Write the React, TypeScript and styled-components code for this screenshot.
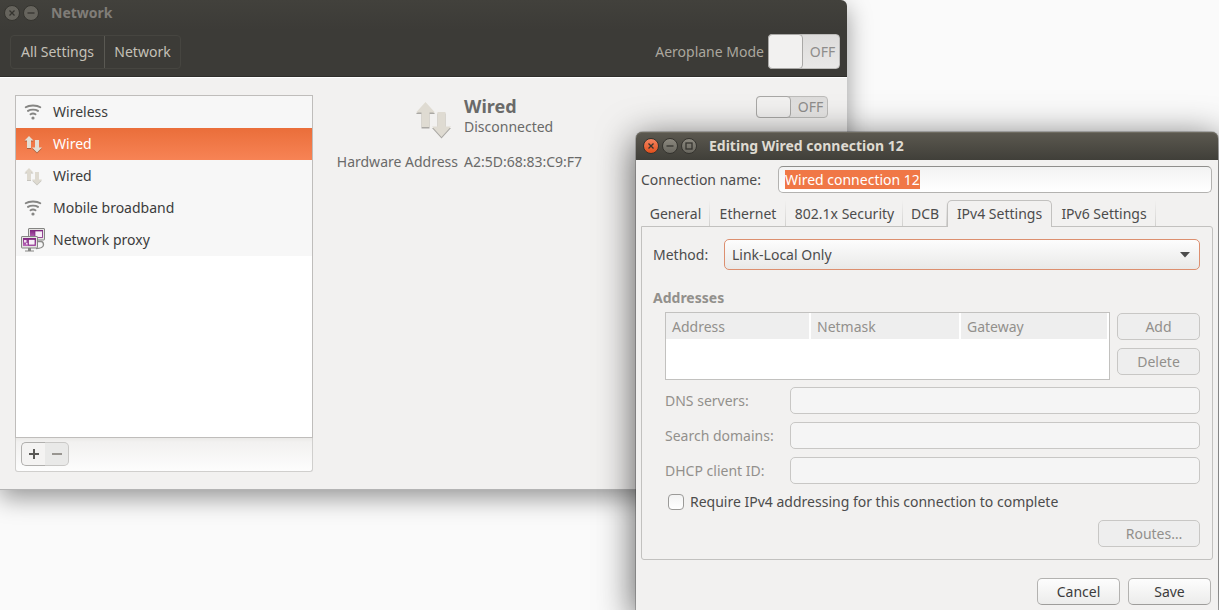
import React, { useEffect, useRef, useState } from "react";
import styled, { createGlobalStyle, css } from "styled-components";

const GlobalStyle = createGlobalStyle`
  *, *::before, *::after { box-sizing: border-box; }
  body {
    margin: 0;
    background: #fafafa;
    color: #3c3c3c;
    font-family: "Noto Sans", "Open Sans", sans-serif;
    font-size: 14px;
    line-height: 20px;
  }
  button, input, select { font: inherit; color: inherit; margin: 0; }
  button:focus, select:focus, input:focus { outline: none; }
  ul { margin: 0; padding: 0; list-style: none; }
`;

const Desktop = styled.main`
  position: relative;
  min-height: 100vh;
  overflow: hidden;
`;

/* ---------- window frames ---------- */

const SettingsWindow = styled.section`
  position: absolute;
  top: 0;
  left: 0;
  right: 372px;
  min-width: 660px;
  border-radius: 0 6px 0 0;
  background: #f2f1f0;
  border-bottom: 1px solid #b4b4b4;
  box-shadow: 0 8px 24px rgba(0, 0, 0, 0.4);
`;

const DialogWindow = styled.section`
  position: absolute;
  top: 132px;
  left: 636px;
  right: 1px;
  min-width: 560px;
  border-radius: 7px 7px 0 0;
  background: #f2f1f0;
  box-shadow: 0 0 0 1px rgba(0, 0, 0, 0.2), 0 8px 36px 2px rgba(0, 0, 0, 0.62);
`;

const TitleBar = styled.header<{ $active?: boolean }>`
  display: flex;
  align-items: center;
  gap: 3px;
  height: ${(p) => (p.$active ? 28 : 26)}px;
  padding: 0 4px;
  color: #807d78;
  ${(p) =>
    p.$active &&
    css`
      padding: 0 7px;
      color: #dfdbd2;
      border-radius: 6px 6px 0 0;
      background: linear-gradient(#5c5950, #403f39);
      box-shadow: inset 0 1px 0 #6e6b60;
    `}
`;

const WindowTitle = styled.h1`
  margin: 0;
  padding-left: 9px;
  font-size: 14px;
  line-height: 20px;
  font-weight: 700;
`;

const WindowButton = styled.button<{ $tone: "close" | "grey" | "dim" }>`
  display: grid;
  place-items: center;
  width: 16px;
  height: 16px;
  padding: 0;
  border: 1px solid #35342f;
  border-radius: 50%;
  color: #35342f;
  background: ${(p) =>
    p.$tone === "close"
      ? "linear-gradient(#f58460, #e2501c)"
      : p.$tone === "grey"
        ? "linear-gradient(#8b887e, #69675f)"
        : "#66645d"};
`;

/* ---------- settings window ---------- */

const DarkHeader = styled.div`
  border-radius: 0 6px 0 0;
  background: linear-gradient(#42413c, #3c3b37 30px);
  border-bottom: 1px solid #2f2e2b;
`;

const Toolbar = styled.div`
  display: flex;
  align-items: center;
  justify-content: space-between;
  padding: 8px 7px 7px 10px;
`;

const Breadcrumbs = styled.nav`
  display: flex;
  border: 1px solid #464540;
  border-radius: 4px;
`;

const Crumb = styled.button<{ $width: number }>`
  width: ${(p) => p.$width}px;
  height: 32px;
  padding: 0;
  border: 0;
  background: none;
  color: #c5c1b8;
  white-space: nowrap;
  & + & { border-left: 1px solid #5a5953; }
`;

const AeroplaneGroup = styled.div`
  display: flex;
  align-items: center;
  gap: 4px;
  color: #aba79e;
`;

const SwitchTrack = styled.label<{ $tall?: boolean }>`
  display: flex;
  width: 72px;
  height: ${(p) => (p.$tall ? 35 : 22)}px;
  border: 1px solid #bdbcba;
  border-radius: 4px;
  background: linear-gradient(#dddcdb, #e9e8e7);
  color: #8e8d8b;
`;

const SwitchKnob = styled.input`
  appearance: none;
  width: 35px;
  margin: -1px !important;
  border: 1px solid #a9a8a6;
  border-radius: 4px;
  background: #f2f1f0;
`;

const SwitchText = styled.span`
  flex: 1;
  align-self: center;
  padding-left: 4px;
  text-align: center;
`;

const SettingsBody = styled.div`
  display: flex;
  gap: 18px;
  padding: 17px 19px 17px 15px;
  border-top: 1px solid #fff;
`;

const Sidebar = styled.div`
  flex: 0 0 298px;
`;

const DeviceList = styled.ul`
  min-height: 343px;
  border: 1px solid #bfbdbb;
  background: #fff;
`;

const DeviceRow = styled.button<{ $selected: boolean }>`
  display: flex;
  align-items: center;
  gap: 8px;
  width: 100%;
  height: 32px;
  padding: 0 5px;
  border: 0;
  text-align: left;
  color: ${(p) => (p.$selected ? "#fff" : "#3c3c3c")};
  background: ${(p) => (p.$selected ? "linear-gradient(#ea6e3a, #f78355)" : "#f7f7f7")};
`;

const ListToolbar = styled.div`
  display: flex;
  padding: 4px 5px 5px;
  border: 1px solid #d0cfcd;
  border-top: 0;
  border-radius: 0 0 3px 3px;
  background: linear-gradient(#eae9e7, #f2f1f0 4px, #fdfdfd);
`;

const ListButton = styled.button`
  display: grid;
  place-items: center;
  width: 24px;
  height: 24px;
  padding: 0;
  border: 1px solid #b0afad;
  border-right: 0;
  border-radius: 5px 0 0 5px;
  color: #5a5956;
  background: #f4f3f2;
  & + & {
    border: 1px solid #c9c8c6;
    border-left: 0;
    border-radius: 0 5px 5px 0;
    background: #e9e9e8;
    color: #989590;
  }
`;

const Details = styled.div`
  flex: 1;
  display: grid;
  grid-template-columns: 127px 1fr auto;
  align-content: start;
  column-gap: 6px;
  padding-top: 1px;
  color: #6a6a69;
`;

const DeviceIcon = styled.div`
  justify-self: end;
  height: 56px;
  padding-top: 6px;
  margin-right: 6px;
`;

const DeviceName = styled.h2`
  margin: 0 0 1px;
  font-size: 18px;
  line-height: 20px;
  font-weight: 700;
`;

const DeviceValue = styled.div`
  line-height: 20px;
  white-space: nowrap;
`;

const HardwareLabel = styled(DeviceValue)`
  justify-self: end;
`;

/* ---------- connection dialog ---------- */

const DialogBody = styled.form`
  padding: 6px 5px 5px;
  color: #4c4c4c;
`;

const NameRow = styled.div`
  display: grid;
  grid-template-columns: 137px 1fr;
  align-items: center;
  padding-right: 1px;
`;

const TextInput = styled.input`
  width: 100%;
  min-width: 0;
  height: 27px;
  padding: 0 6px;
  border: 1px solid #b3b2b0;
  border-top-color: #8f8e8c;
  border-radius: 5px;
  background: linear-gradient(#f3f3f3, #fff);
  &::selection { background: #f07746; color: #fff; }
  &:disabled {
    border-color: #c8c7c5;
    background: #f5f5f5;
  }
`;

const TabStrip = styled.div`
  display: flex;
  align-items: flex-end;
  height: 26px;
  margin-top: 7px;
`;

const Tab = styled.button<{ $width: number; $active: boolean }>`
  width: ${(p) => p.$width}px;
  height: 26px;
  padding: 2px 0 0;
  border: 0;
  white-space: nowrap;
  background: linear-gradient(#f2f1f0, #d2d1cf) right / 1px 100% no-repeat;
  ${(p) =>
    p.$active &&
    css`
      position: relative;
      height: 27px;
      margin-bottom: -1px;
      padding: 0;
      border: 1px solid #c2c1bf;
      border-bottom: 0;
      border-radius: 5px 5px 0 0;
      background: #f2f1f0;
    `}
`;

const TabPanel = styled.div`
  padding: 12px 12px 12px 11px;
  border: 1px solid #c2c1bf;
  border-radius: 0 3px 3px 3px;
`;

const MethodRow = styled.div`
  display: grid;
  grid-template-columns: 71px 1fr;
  align-items: center;
`;

const SelectWrap = styled.div`
  position: relative;
`;

const Select = styled.select`
  appearance: none;
  display: block;
  width: 100%;
  height: 31px;
  padding: 0 7px;
  border: 1px solid #dc8f6f;
  border-radius: 5px;
  background: linear-gradient(#fdfdfd, #e9e9e8);
`;

const SelectArrow = styled.svg`
  position: absolute;
  right: 10px;
  top: 13px;
  pointer-events: none;
`;

const SectionTitle = styled.h2`
  margin: 18px 0 4px;
  font-size: 14px;
  line-height: 20px;
  font-weight: 700;
  color: #92908c;
`;

const Indented = styled.div`
  padding-left: 12px;
`;

const AddressArea = styled.div`
  display: flex;
  align-items: flex-start;
  gap: 7px;
`;

const TableFrame = styled.div`
  flex: 1;
  height: 68px;
  border: 1px solid #c2c1bf;
  background: #fff;
`;

const AddressTable = styled.table`
  width: 100%;
  table-layout: fixed;
  border-collapse: separate;
  border-spacing: 0;
  color: #92908c;
  th {
    height: 26px;
    padding: 2px 6px 0;
    border-right: 2px solid #fff;
    background: #eeeeee;
    text-align: left;
    font-weight: 400;
  }
  th:first-child { width: 145px; }
  th:nth-child(2) { width: 150px; }
`;

const ButtonStack = styled.div`
  display: grid;
  gap: 8px;
  padding-top: 1px;
`;

const PushButton = styled.button<{ $wide?: boolean }>`
  width: ${(p) => (p.$wide ? 102 : 83)}px;
  height: 27px;
  padding: ${(p) => (p.$wide ? "0 0 0 10px" : "0")};
  border: 1px solid #b3b2b0;
  border-bottom-color: #9e9d9b;
  border-radius: 5px;
  background: linear-gradient(#fdfdfd, #ececeb);
  color: #3c3c3c;
  &:disabled {
    border-color: #c8c7c5;
    background: #eeeeee;
    color: #92908c;
  }
`;

const Fields = styled.div`
  display: grid;
  gap: 8px;
  margin-top: 7px;
`;

const Field = styled.div`
  display: grid;
  grid-template-columns: 125px 1fr;
  align-items: center;
  color: #92908c;
`;

const CheckRow = styled.label`
  display: flex;
  align-items: center;
  gap: 6px;
  margin-top: 8px;
  padding-left: 3px;
`;

const CheckBox = styled.input`
  appearance: none;
  width: 16px;
  height: 16px;
  border: 1px solid #9b9a98;
  border-radius: 4px;
  background: linear-gradient(#f3f3f3, #fff);
`;

const ButtonRow = styled.div<{ $gapAbove: number; $inset?: boolean }>`
  display: flex;
  justify-content: flex-end;
  gap: 8px;
  margin-top: ${(p) => p.$gapAbove}px;
  padding-right: ${(p) => (p.$inset ? 2 : 0)}px;
`;

/* ---------- drawings ---------- */

const WifiIcon = () => (
  <svg width="24" height="24" viewBox="0 0 24 24" fill="none" stroke="#868684" strokeWidth="1.9" strokeLinecap="round">
    <path d="M4.700 7.300C8 4.900 16 4.900 19.300 7.300" />
    <path d="M7 10.900C9.500 9.200 14.500 9.200 17 10.900" />
    <path d="M9.500 14.200C11 13.300 13 13.300 14.500 14.200" />
    <circle cx="12" cy="18" r="1.600" fill="#868684" stroke="none" />
  </svg>
);

const ArrowsIcon = ({ size, fill, edge }: { size: number; fill: string; edge: string }) => {
  const up = "M10 0L19.500 10.500H14V25H6V10.500H0.500Z";
  const down = "M22 10H30V24.500H35.500L26 35L16.500 24.500H22Z";
  return (
    <svg width={size} height={size} viewBox="0 0 36 37">
      <path d={up} fill={edge} transform="translate(0 1.500)" />
      <path d={down} fill={edge} transform="translate(0 1.500)" />
      <path d={up} fill={fill} />
      <path d={down} fill={fill} />
    </svg>
  );
};

const SmallArrows = ({ fill, edge }: { fill: string; edge: string }) => (
  <svg width="24" height="24" viewBox="0 0 24 24">
    <g fill={edge}>
      <path d="M8 5L12.500 9.500H10V17H6V9.500H3.500Z" />
      <path d="M14 9H18V16.500H21L16 21.500L11 16.500H14Z" />
    </g>
    <g fill={fill}>
      <path d="M8 4L12.500 8.500H10V16H6V8.500H3.500Z" />
      <path d="M14 8H18V15.500H21L16 20.500L11 15.500H14Z" />
    </g>
  </svg>
);

const ProxyIcon = () => (
  <svg width="24" height="24" viewBox="0 0 24 24">
    <defs>
      <linearGradient id="screen" x1="0" x2="0" y1="0" y2="1">
        <stop offset="0" stopColor="#7d247d" />
        <stop offset="1" stopColor="#bd6abd" />
      </linearGradient>
    </defs>
    <path d="M17 13.500H20.500Q22.500 14 22.500 17Q22 20.500 15 20.500" fill="none" stroke="#8c8c8a" strokeWidth="1.300" />
    <rect x="7.500" y="0.500" width="16" height="11.500" rx="0.500" fill="#e4e3e1" stroke="#858583" />
    <rect x="9" y="2" width="13" height="8" fill="url(#screen)" />
    <rect x="14" y="3" width="7.500" height="6.500" fill="#f8eef8" stroke="#7d247d" strokeWidth="0.700" />
    <path d="M7 20h3v2.500h3v1H4v-1h3z" fill="#858583" />
    <rect x="0.500" y="8.500" width="16" height="11.500" rx="0.500" fill="#e4e3e1" stroke="#858583" />
    <rect x="2" y="10" width="13" height="8" fill="url(#screen)" />
    <rect x="3" y="12" width="2.500" height="2.500" fill="#f0dcf0" />
    <rect x="5" y="15" width="1.500" height="1.500" fill="#f0dcf0" />
    <rect x="7.500" y="11.500" width="6.500" height="5.500" fill="#f8eef8" stroke="#7d247d" strokeWidth="0.700" />
  </svg>
);

const Glyph = ({ kind }: { kind: "close" | "minimise" | "maximise" }) => (
  <svg width="10" height="10" viewBox="0 0 10 10" fill="none" stroke="currentColor" strokeWidth="1.300">
    {kind === "close" && <path d="M2.500 2.500L7.500 7.500M7.500 2.500L2.500 7.500" />}
    {kind === "minimise" && <path d="M1.500 5H8.500" />}
    {kind === "maximise" && <rect x="2" y="2" width="6" height="6" />}
  </svg>
);

const Sign = ({ plus }: { plus?: boolean }) => (
  <svg width="10" height="10" viewBox="0 0 10 10" fill="currentColor">
    <rect y="4" width="10" height="2" />
    {plus && <rect x="4" width="2" height="10" />}
  </svg>
);

/* ---------- parts ---------- */

const Switch = ({ label, tall }: { label: string; tall?: boolean }) => (
  <SwitchTrack $tall={tall}>
    <SwitchKnob type="checkbox" role="switch" aria-label={label} />
    <SwitchText>OFF</SwitchText>
  </SwitchTrack>
);

const devices = [
  { name: "Wireless", icon: <WifiIcon /> },
  { name: "Wired", icon: <SmallArrows fill="#e3dfd5" edge="#a8603e" /> },
  { name: "Wired", icon: <SmallArrows fill="#dedad0" edge="#c6c4be" /> },
  { name: "Mobile broadband", icon: <WifiIcon /> },
  { name: "Network proxy", icon: <ProxyIcon /> },
];

const tabs = [
  { name: "General", width: 69 },
  { name: "Ethernet", width: 76 },
  { name: "802.1x Security", width: 117 },
  { name: "DCB", width: 44 },
  { name: "IPv4 Settings", width: 105 },
  { name: "IPv6 Settings", width: 104 },
];

const fields = [
  { id: "dns", name: "DNS servers:" },
  { id: "search", name: "Search domains:" },
  { id: "dhcp", name: "DHCP client ID:" },
];

function NetworkSettings() {
  const [selected, setSelected] = useState(1);
  return (
    <SettingsWindow aria-label="Network">
      <DarkHeader>
        <TitleBar>
          <WindowButton $tone="dim" aria-label="Close"><Glyph kind="close" /></WindowButton>
          <WindowButton $tone="dim" aria-label="Minimise"><Glyph kind="minimise" /></WindowButton>
          <WindowTitle>Network</WindowTitle>
        </TitleBar>
        <Toolbar>
          <Breadcrumbs>
            <Crumb $width={93}>All Settings</Crumb>
            <Crumb $width={76}>Network</Crumb>
          </Breadcrumbs>
          <AeroplaneGroup>
            <span>Aeroplane Mode</span>
            <Switch label="Aeroplane Mode" tall />
          </AeroplaneGroup>
        </Toolbar>
      </DarkHeader>
      <SettingsBody>
        <Sidebar>
          <DeviceList>
            {devices.map((d, i) => (
              <li key={i}>
                <DeviceRow $selected={i === selected} onClick={() => setSelected(i)}>
                  {d.icon}
                  {d.name}
                </DeviceRow>
              </li>
            ))}
          </DeviceList>
          <ListToolbar>
            <ListButton aria-label="Add"><Sign plus /></ListButton>
            <ListButton aria-label="Remove"><Sign /></ListButton>
          </ListToolbar>
        </Sidebar>
        <Details>
          <DeviceIcon><ArrowsIcon size={37} fill="#dfdbd2" edge="#aaa8a4" /></DeviceIcon>
          <div>
            <DeviceName>Wired</DeviceName>
            <DeviceValue>Disconnected</DeviceValue>
          </div>
          <Switch label="Wired" />
          <HardwareLabel>Hardware Address</HardwareLabel>
          <DeviceValue>A2:5D:68:83:C9:F7</DeviceValue>
        </Details>
      </SettingsBody>
    </SettingsWindow>
  );
}

function ConnectionDialog() {
  const nameRef = useRef<HTMLInputElement>(null);
  const [tab, setTab] = useState(4);
  useEffect(() => {
    nameRef.current?.focus({ preventScroll: true });
    nameRef.current?.select();
  }, []);
  return (
    <DialogWindow role="dialog" aria-label="Editing Wired connection 12">
      <TitleBar $active>
        <WindowButton $tone="close" aria-label="Close"><Glyph kind="close" /></WindowButton>
        <WindowButton $tone="grey" aria-label="Minimise"><Glyph kind="minimise" /></WindowButton>
        <WindowButton $tone="grey" aria-label="Maximise"><Glyph kind="maximise" /></WindowButton>
        <WindowTitle>Editing Wired connection 12</WindowTitle>
      </TitleBar>
      <DialogBody onSubmit={(e) => e.preventDefault()}>
        <NameRow>
          <label htmlFor="name">Connection name:</label>
          <TextInput id="name" ref={nameRef} defaultValue="Wired connection 12" spellCheck={false} />
        </NameRow>
        <TabStrip role="tablist">
          {tabs.map((t, i) => (
            <Tab
              key={t.name}
              type="button"
              role="tab"
              aria-selected={i === tab}
              $active={i === tab}
              $width={t.width}
              onClick={() => setTab(i)}
            >
              {t.name}
            </Tab>
          ))}
        </TabStrip>
        <TabPanel role="tabpanel">
          <MethodRow>
            <label htmlFor="method">Method:</label>
            <SelectWrap>
              <Select id="method" defaultValue="Link-Local Only">
                <option>Link-Local Only</option>
              </Select>
              <SelectArrow width="10" height="6" viewBox="0 0 10 6">
                <path d="M0 0H10L5 5.500Z" fill="#4c4c4c" />
              </SelectArrow>
            </SelectWrap>
          </MethodRow>
          <SectionTitle>Addresses</SectionTitle>
          <Indented>
            <AddressArea>
              <TableFrame>
                <AddressTable>
                  <thead>
                    <tr>
                      <th>Address</th>
                      <th>Netmask</th>
                      <th>Gateway</th>
                    </tr>
                  </thead>
                </AddressTable>
              </TableFrame>
              <ButtonStack>
                <PushButton type="button" disabled>Add</PushButton>
                <PushButton type="button" disabled>Delete</PushButton>
              </ButtonStack>
            </AddressArea>
            <Fields>
              {fields.map((f) => (
                <Field key={f.id}>
                  <label htmlFor={f.id}>{f.name}</label>
                  <TextInput id={f.id} disabled />
                </Field>
              ))}
            </Fields>
            <CheckRow>
              <CheckBox type="checkbox" />
              Require IPv4 addressing for this connection to complete
            </CheckRow>
            <ButtonRow $gapAbove={8}>
              <PushButton type="button" $wide disabled>Routes…</PushButton>
            </ButtonRow>
          </Indented>
        </TabPanel>
        <ButtonRow $gapAbove={18} $inset>
          <PushButton type="button">Cancel</PushButton>
          <PushButton type="submit">Save</PushButton>
        </ButtonRow>
      </DialogBody>
    </DialogWindow>
  );
}

export default function App() {
  return (
    <>
      <GlobalStyle />
      <Desktop>
        <NetworkSettings />
        <ConnectionDialog />
      </Desktop>
    </>
  );
}
